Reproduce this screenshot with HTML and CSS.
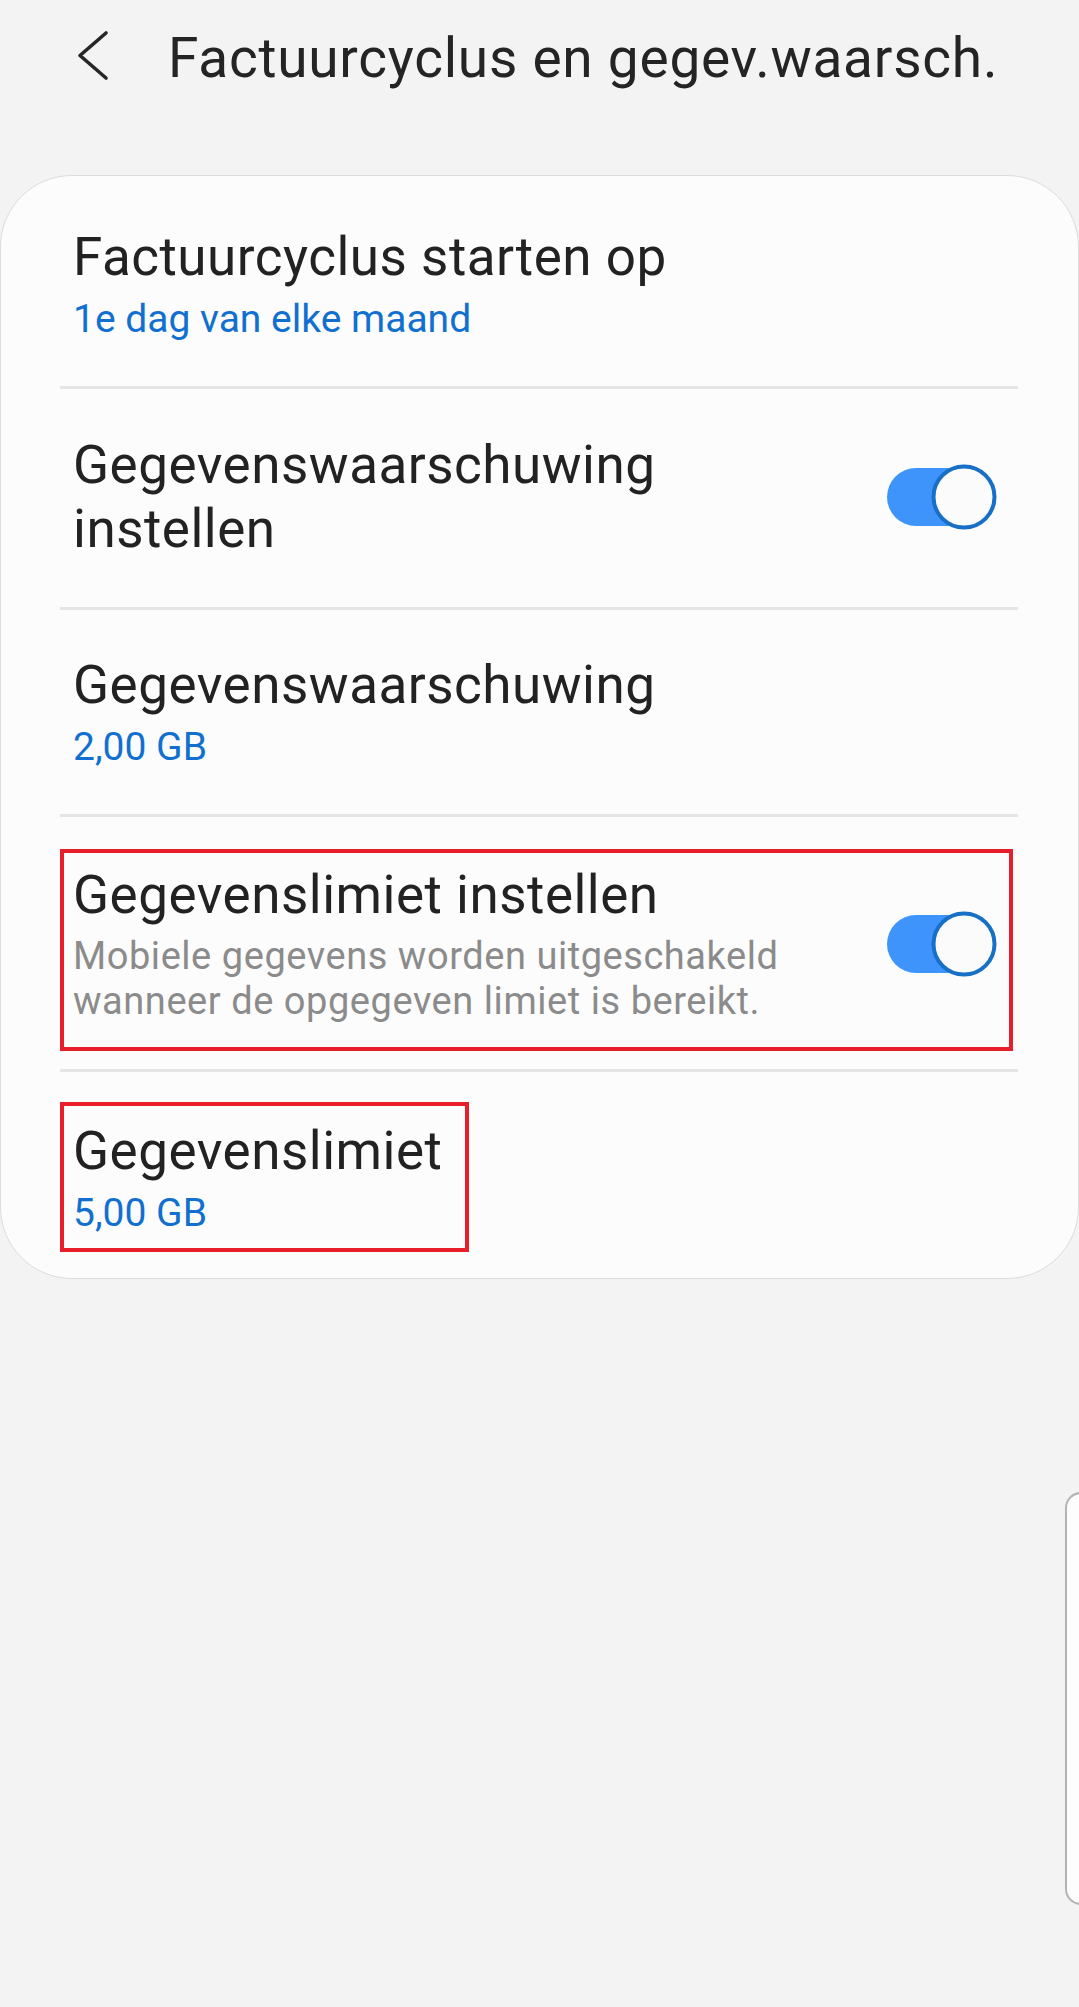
FILE: index.html
```html
<!DOCTYPE html>
<html lang="nl">
<head>
<meta charset="utf-8">
<title>Factuurcyclus en gegev.waarsch.</title>
<link rel="stylesheet" href="styles.css">
</head>
<body>
<div class="screen">
  <header class="appbar">
    <svg class="back" width="40" height="56" viewBox="0 0 40 56" aria-hidden="true">
      <path d="M31 5 L5 27.5 L31 50" fill="none" stroke="#262626" stroke-width="3.6" stroke-linecap="round" stroke-linejoin="round"/>
    </svg>
    <h1 class="title">Factuurcyclus en gegev.waarsch.</h1>
  </header>

  <section class="card">
    <div class="row row-first">
      <div class="text">
        <div class="label">Factuurcyclus starten op</div>
        <div class="value">1e dag van elke maand</div>
      </div>
    </div>
    <div class="sep"></div>
    <div class="row row-toggle">
      <div class="text">
        <div class="label">Gegevenswaarschuwing<br>instellen</div>
      </div>
      <svg class="switch" width="110" height="66" viewBox="0 0 110 66" aria-hidden="true">
        <rect x="0" y="4" width="92" height="58" rx="29" fill="#3f94fb"/>
        <circle cx="77" cy="33" r="30.5" fill="#fbfbfb" stroke="#176fc6" stroke-width="4"/>
      </svg>
    </div>
    <div class="sep"></div>
    <div class="row">
      <div class="text">
        <div class="label">Gegevenswaarschuwing</div>
        <div class="value">2,00 GB</div>
      </div>
    </div>
    <div class="sep"></div>
    <div class="row row-limit">
      <div class="text">
        <div class="label">Gegevenslimiet instellen</div>
        <div class="desc">Mobiele gegevens worden uitgeschakeld<br>wanneer de opgegeven limiet is bereikt.</div>
      </div>
      <svg class="switch" width="110" height="66" viewBox="0 0 110 66" aria-hidden="true">
        <rect x="0" y="4" width="92" height="58" rx="29" fill="#3f94fb"/>
        <circle cx="77" cy="33" r="30.5" fill="#fbfbfb" stroke="#176fc6" stroke-width="4"/>
      </svg>
      <div class="mark mark-wide"></div>
    </div>
    <div class="sep"></div>
    <div class="row row-last">
      <div class="text">
        <div class="label">Gegevenslimiet</div>
        <div class="value">5,00 GB</div>
      </div>
      <div class="mark mark-narrow"></div>
    </div>
  </section>

  <div class="scroll-handle"></div>
</div>
</body>
</html>
```
FILE: styles.css
```css
html, body {
  margin: 0;
  padding: 0;
}

body {
  background: #f3f3f3;
  font-family: Roboto, "Noto Sans", "Liberation Sans", sans-serif;
  color: #222222;
}

.screen {
  position: relative;
  width: 1079px;
  min-height: 2007px;
  overflow: hidden;
}

.appbar {
  display: flex;
  align-items: flex-start;
  height: 175px;
  box-sizing: border-box;
  padding: 26px 0 0 75px;
}

.back {
  display: block;
  margin-top: 2px;
  flex: none;
}

.title {
  margin: 0 0 0 53px;
  font-size: 55px;
  line-height: 64px;
  letter-spacing: 0.75px;
  font-weight: 400;
  color: #242424;
  white-space: nowrap;
}

.card {
  background: #fcfcfc;
  border: 1px solid #dcdcdc;
  border-radius: 72px;
  box-sizing: border-box;
  width: 1079px;
}

.row {
  position: relative;
  display: flex;
  align-items: center;
  padding: 43px 81px 42px 72px;
}

.row-first {
  padding-top: 49px;
  padding-bottom: 42px;
}

.row-toggle {
  padding-top: 44px;
  padding-bottom: 46px;
}

.row-limit {
  padding-top: 46px;
  padding-bottom: 45px;
}

.row-last {
  padding-top: 47px;
  padding-bottom: 40px;
}

.text {
  flex: 1;
  min-width: 0;
}

.label {
  font-size: 53px;
  line-height: 64px;
  letter-spacing: 0.5px;
  color: #222222;
}

.value {
  margin-top: 5px;
  font-size: 39px;
  line-height: 50px;
  color: #1170cf;
}

.desc {
  margin-top: 7px;
  font-size: 38px;
  line-height: 45px;
  letter-spacing: 0.55px;
  color: #8b8b8b;
}

.switch {
  display: block;
  flex: none;
}

.sep {
  height: 3px;
  margin: 0 60px 0 59px;
  background: #e5e5e5;
}

.mark {
  position: absolute;
  left: 59px;
  border: 4px solid #e61f2a;
  box-sizing: border-box;
}

.mark-wide {
  top: 32px;
  width: 953px;
  height: 202px;
}

.mark-narrow {
  top: 30px;
  width: 409px;
  height: 150px;
}

.scroll-handle {
  position: absolute;
  left: 1065px;
  top: 1492px;
  width: 40px;
  height: 413px;
  box-sizing: border-box;
  border: 2px solid #b3b3b3;
  border-radius: 16px;
  background: #fdfdfd;
}
```
